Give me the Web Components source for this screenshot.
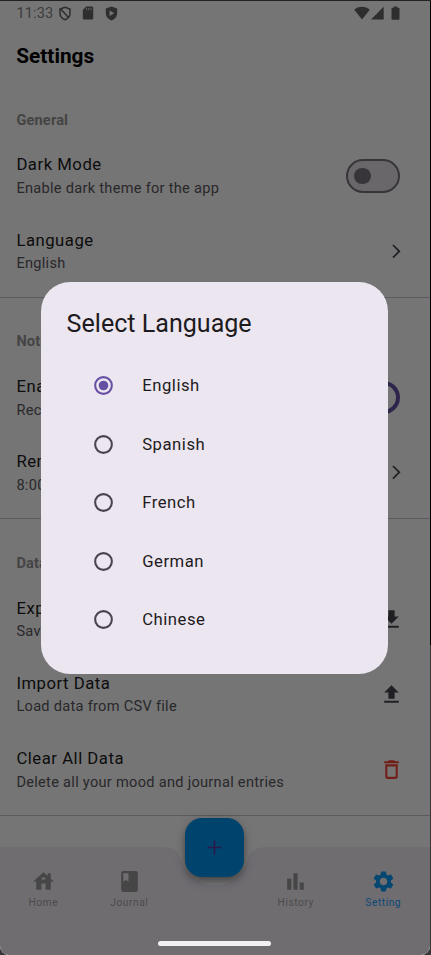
<!DOCTYPE html>
<html lang="en">
<head>
<meta charset="utf-8">
<title>Settings</title>
<style>
html,body{margin:0;height:100%;overflow:hidden;background:#000}
</style>
</head>
<body>
<phone-screen></phone-screen>
<script>
const define = (name, render) => customElements.define(name, class extends HTMLElement {
  connectedCallback() {
    if (this.shadowRoot) return;
    this.attachShadow({ mode: 'open' }).innerHTML = render(this);
  }
});

const icons = {
  download: 'M19 9h-4V3H9v6H5l7 7 7-7zM5 18v2h14v-2H5z',
  upload: 'M9 16h6v-6h4l-7-7-7 7h4zm-4 2h14v2H5z',
  trash: 'M6 19c0 1.1.9 2 2 2h8c1.1 0 2-.9 2-2V7H6v12zM8 9h8v10H8V9zm7.5-5l-1-1h-5l-1 1H5v2h14V4z',
  house: 'M19 9.3V4h-3v2.6L12 3 2 12h3v8h5v-6h4v6h5v-8h3l-3-2.7zm-9 .7c0-1.1.9-2 2-2s2 .9 2 2h-4z',
  book: 'M18 2H6c-1.1 0-2 .9-2 2v16c0 1.1.9 2 2 2h12c1.1 0 2-.9 2-2V4c0-1.1-.9-2-2-2zM6 4h5v8l-2.5-1.5L6 12V4z',
  bars: 'M4 9h4v11H4zm12 4h4v7h-4zm-6-9h4v16h-4z',
  gear: 'M19.14 12.94c.04-.3.06-.61.06-.94 0-.32-.02-.64-.07-.94l2.03-1.58c.18-.14.23-.41.12-.61l-1.92-3.32c-.12-.22-.37-.29-.59-.22l-2.39.96c-.5-.38-1.03-.7-1.62-.94l-.36-2.54c-.04-.24-.24-.41-.48-.41h-3.84c-.24 0-.43.17-.47.41l-.36 2.54c-.59.24-1.13.57-1.62.94l-2.39-.96c-.22-.08-.47 0-.59.22L2.74 8.87c-.12.21-.08.47.12.61l2.03 1.58c-.05.3-.09.63-.09.94s.02.64.07.94l-2.03 1.58c-.18.14-.23.41-.12.61l1.92 3.32c.12.22.37.29.59.22l2.39-.96c.5.38 1.03.7 1.62.94l.36 2.54c.05.24.24.41.48.41h3.84c.24 0 .44-.17.47-.41l.36-2.54c.59-.24 1.13-.56 1.62-.94l2.39.96c.22.08.47 0 .59-.22l1.92-3.32c.12-.22.07-.47-.12-.61l-2.01-1.58zM12 15.6c-1.98 0-3.6-1.62-3.6-3.6s1.62-3.6 3.6-3.6 3.6 1.62 3.6 3.6-1.62 3.6-3.6 3.6z',
  chevron: 'M6.23 20.23L8 22l10-10L8 2 6.23 3.77 14.46 12z',
  plus: 'M18.700 12.800h-5.900v5.900h-1.600v-5.900H5.300v-1.600h5.900V5.300h1.600v5.900h5.900z'
};

define('md-icon', el => `
<style>:host{display:block;flex:none}svg{display:block}</style>
<svg width="${el.getAttribute('size') || 25}" height="${el.getAttribute('size') || 25}" viewBox="0 0 24 24" fill="currentColor"><path d="${icons[el.getAttribute('name')]}"/></svg>`);

define('status-bar', () => `
<style>
:host{display:flex;height:25px;align-items:center;padding:1px 30px 0 16.500px;box-sizing:border-box;color:#646464}
time{font-size:14.6px;letter-spacing:.1px;line-height:17px;color:#858585;margin-right:4.500px;width:37px;white-space:nowrap}
svg{display:block;flex:none}
.gap{flex:1}
</style>
<time>11:33</time>
<svg width="14" height="15" viewBox="0 0 14 15" fill="none" stroke="currentColor" stroke-width="1.5"><path d="M7 1.2L12 3v4.2c0 3.1-2.100 5.400-5 6.500C4.100 12.600 2 10.300 2 7.200V3zM3.200 3.600l7 7.700"/></svg>
<svg style="margin-left:10px" width="12" height="14" viewBox="0 0 12 14"><path d="M4.300.500H10a1.200 1.200 0 0 1 1.200 1.200v10.600A1.200 1.200 0 0 1 10 13.500H2a1.200 1.200 0 0 1-1.200-1.200V4z" fill="currentColor"/><path d="M4.500 2v2.200M6.700 2v2.200M8.900 2v2.200" stroke="#d8d8d8" stroke-width="1"/></svg>
<svg style="margin-left:11px" width="13" height="15" viewBox="0 0 13 15"><path d="M6.500.500l5.700 2.100v4.300c0 3.700-2.400 6.300-5.700 7.500C3.200 13.200.8 10.600.8 6.900V2.600z" fill="currentColor"/><path d="M4.600 4.500v5.400l4.600-2.700z" fill="#fff"/></svg>
<span class="gap"></span>
<svg width="16" height="14" viewBox="0 0 16 14" fill="currentColor"><path d="M8 13.500L.2 3.800C2.300 1.800 5 .7 8 .7s5.700 1.100 7.800 3.100z"/></svg>
<svg style="margin-left:1px" width="13" height="14" viewBox="0 0 13 14" fill="currentColor"><path d="M12.700.7v12.800H0z"/></svg>
<svg style="margin-left:7px;margin-right:.5px" width="9" height="14" viewBox="0 0 9 14" fill="currentColor"><path d="M2.700.500h3.600v1.200h1.200c.6 0 1 .4 1 1v10.100c0 .6-.4 1-1 1h-6c-.6 0-1-.4-1-1V2.700c0-.6.400-1 1-1h1.200z"/></svg>`);

define('md-switch', el => {
  const on = el.hasAttribute('on');
  return `
<style>
:host{display:flex;align-items:center;flex:none;box-sizing:border-box;width:54.300px;height:33.400px;border-radius:17px;
border:2.090px solid ${on ? '#6750a4' : '#79747e'};background:${on ? '#6750a4' : '#e6e0e9'};padding:0 ${on ? 2 : 6.300}px;justify-content:${on ? 'flex-end' : 'flex-start'}}
i{width:${on ? 25 : 16.700}px;height:${on ? 25 : 16.700}px;border-radius:50%;background:${on ? '#fff' : '#79747e'}}
</style><i></i>`;
});

define('settings-section', el => `
<style>
:host{display:block}
h2{margin:0;padding:25.600px 16.400px 7.900px;font-size:14.600px;line-height:20.900px;font-weight:700;letter-spacing:.15px;color:#949494}
hr{margin:7.900px 0;border:0;height:1px;background:#cac4d0}
</style>
<h2>${el.getAttribute('heading')}</h2><slot></slot><hr>`);

define('settings-row', el => `
<style>
:host{display:flex;align-items:center;justify-content:space-between;height:75.200px;box-sizing:border-box;padding:0 30px 0 16.400px}
div{padding-top:1.400px}
b,span{display:block;white-space:nowrap}
b{font-weight:400;font-size:16.700px;line-height:24.600px;letter-spacing:.52px;color:#1d1b20}
span{font-size:14.600px;line-height:21.800px;letter-spacing:.28px;color:#5a5760}
</style>
<div><b>${el.getAttribute('label')}</b><span>${el.getAttribute('detail')}</span></div><slot></slot>`);

define('nav-item', el => `
<style>
:host{display:flex;flex-direction:column;align-items:center;color:#9a9a9a}
:host([active]){color:#0c9cf4}
span{font-size:10.300px;line-height:14px;letter-spacing:.5px;margin-top:1.500px;padding-left:.5px}
:host(:not([active])) span{color:#a6a6a6}
:host([active]) span{color:#1a9dff}
</style>
<md-icon name="${el.getAttribute('icon')}" size="${el.getAttribute('size') || 25}"></md-icon><span><slot></slot></span>`);

define('bottom-nav', () => `
<style>
:host{display:block;position:absolute;left:0;right:0;bottom:0;height:108px}
svg{position:absolute;inset:0}
nav{position:relative;display:grid;grid-template-columns:86px 86px 80px 87px 88px;padding-top:22px}
.fab{position:absolute;left:185px;top:-29.500px;width:59px;height:59px;border-radius:17px;background:#0094ee;color:#5a36a0;display:flex;align-items:center;justify-content:center;
box-shadow:0 3px 5px rgba(0,0,0,.22),0 6px 10px rgba(0,0,0,.15),0 1px 14px rgba(0,0,0,.12)}
</style>
<svg width="430" height="108"><path fill="#f3edf7" d="M0 0H163C173 0 178 4 181 12A34.500 34.500 0 0 0 248 12C251 4 256 0 266 0H430V108H0z"/></svg>
<nav><nav-item icon="house">Home</nav-item><nav-item icon="book">Journal</nav-item><i></i><nav-item icon="bars">History</nav-item><nav-item icon="gear" active>Setting</nav-item></nav>
<div class="fab"><md-icon name="plus"></md-icon></div>`);

define('radio-option', el => `
<style>
:host{display:flex;align-items:center;height:58.500px;padding-left:53.200px;color:#1d1b20;font-size:16.700px;letter-spacing:.52px}
svg{display:block;margin-right:28.700px;flex:none}
</style>
<svg width="19" height="19" viewBox="0 0 19 19"><circle cx="9.500" cy="9.500" r="8.350" fill="none" stroke="${el.hasAttribute('checked') ? '#6750a4' : '#49454f'}" stroke-width="2.090"/>${el.hasAttribute('checked') ? '<circle cx="9.5" cy="9.5" r="4.8" fill="#6750a4"/>' : ''}</svg><span><slot></slot></span>`);

define('language-dialog', () => `
<style>
:host{display:block;position:absolute;left:41.300px;top:282px;width:346.700px;height:392.400px;box-sizing:border-box;border-radius:29px;background:#ece6f0;padding-top:25px}
h1{margin:0 0 15.900px;padding-left:25.300px;font-weight:400;font-size:25.080px;line-height:33.400px;color:#1d1b20}
</style>
<h1>Select Language</h1>
<radio-option checked>English</radio-option><radio-option>Spanish</radio-option><radio-option>French</radio-option><radio-option>German</radio-option><radio-option>Chinese</radio-option>`);

define('phone-screen', () => `
<style>
:host{display:block;position:relative;width:431px;height:955px;background:linear-gradient(#000 645px,#38383a 645px);font-family:Roboto,sans-serif;overflow:hidden}
.screen{position:absolute;left:0;top:0;width:430px;height:955px;background:#fff;overflow:hidden;border-radius:0 0 9px 9px}
header{height:59px;display:flex;align-items:center;font-size:20.800px;font-weight:700;color:#000;box-sizing:border-box;padding:3px 0 0 16.300px}
.scrim{position:absolute;inset:0;background:rgba(0,0,0,.54)}
.top{position:absolute;left:0;top:0;width:431px;height:1px;background:#222}
.home{position:absolute;left:158px;top:941px;width:113px;height:4.500px;border-radius:3px;background:#f3f0f4}
md-icon{color:#49454f;margin-right:-4.300px}
</style>
<div class="screen">
<status-bar></status-bar>
<header>Settings</header>
<settings-section heading="General">
<settings-row label="Dark Mode" detail="Enable dark theme for the app"><md-switch></md-switch></settings-row>
<settings-row label="Language" detail="English"><md-icon name="chevron" size="16.7"></md-icon></settings-row>
</settings-section>
<settings-section heading="Notifs">
<settings-row label="Enable" detail="Receive alerts"><md-switch on></md-switch></settings-row>
<settings-row label="Reminder" detail="8:00 PM"><md-icon name="chevron" size="16.7"></md-icon></settings-row>
</settings-section>
<settings-section heading="Data">
<settings-row label="Export Data" detail="Save data to CSV file"><md-icon name="download"></md-icon></settings-row>
<settings-row label="Import Data" detail="Load data from CSV file"><md-icon name="upload"></md-icon></settings-row>
<settings-row label="Clear All Data" detail="Delete all your mood and journal entries"><md-icon name="trash" style="color:#f44336"></md-icon></settings-row>
</settings-section>
<bottom-nav></bottom-nav>
<div class="scrim"></div>
<language-dialog></language-dialog>
<div class="home"></div>
</div>
<div class="top"></div>`);
</script>
</body>
</html>
